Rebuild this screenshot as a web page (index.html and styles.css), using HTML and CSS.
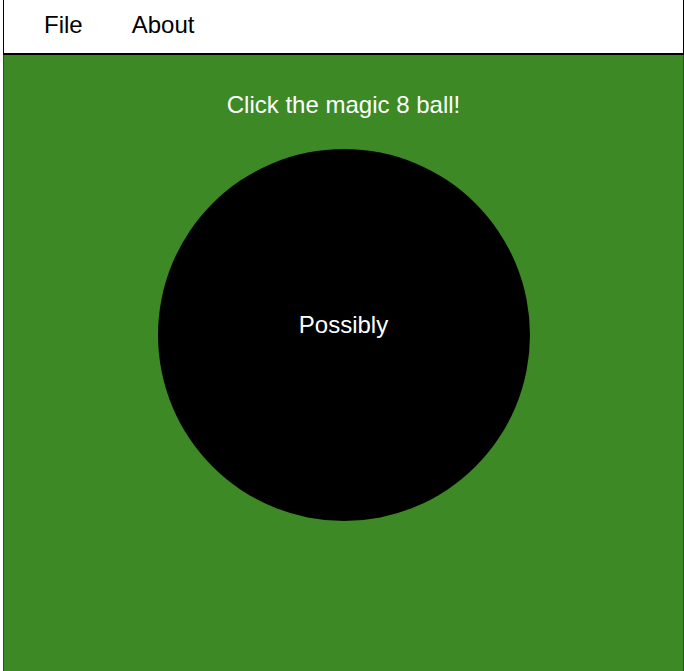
FILE: index.html
```html
<!DOCTYPE html>
<html>
<head>
<meta charset="utf-8">
<link rel="stylesheet" href="styles.css">
</head>
<body>
<div class="app">
  <nav class="menubar">
    <span class="menu-item">File</span>
    <span class="menu-item">About</span>
  </nav>
  <main class="stage">
    <h1 class="prompt">Click the magic 8 ball!</h1>
    <div class="ball"><span class="answer">Possibly</span></div>
  </main>
</div>
</body>
</html>
```
FILE: styles.css
```css
html, body {
  margin: 0;
  padding: 0;
  background: #ffffff;
  height: 100%;
}
body {
  font-family: "Liberation Sans", Arial, sans-serif;
  font-size: 24px;
}
.app {
  margin-left: 3px;
  width: 681px;
  box-sizing: border-box;
  height: 100%;
  display: flex;
  flex-direction: column;
}
.menubar {
  height: 55px;
  box-sizing: border-box;
  background: #ffffff;
  border-left: 1px solid #000;
  border-right: 1px solid #000;
  border-bottom: 2px solid #000;
  display: flex;
  padding: 11px 0 0 40px;
  gap: 49px;
  color: #000;
}
.menu-item {
  line-height: normal;
}
.stage {
  flex: 1;
  background: #3c8926;
  border-left: 1px solid #28531c;
  border-right: 1px solid #28531c;
  display: flex;
  flex-direction: column;
  align-items: center;
}
.prompt {
  margin: 36px 0 0 0;
  font-size: 24px;
  font-weight: normal;
  color: #fff;
  line-height: normal;
}
.ball {
  margin-top: 30px;
  width: 372px;
  height: 372px;
  border-radius: 50%;
  background: #000;
  display: flex;
  align-items: center;
  justify-content: center;
  box-sizing: border-box;
  padding-bottom: 21px;
}
.answer {
  color: #fff;
  font-size: 24px;
}
```
